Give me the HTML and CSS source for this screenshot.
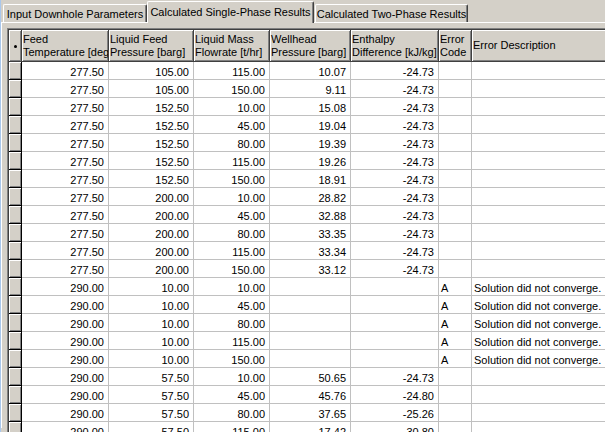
FILE: index.html
```html
<!DOCTYPE html>
<html>
<head>
<meta charset="utf-8">
<title>Results</title>
<link rel="stylesheet" href="styles.css">
</head>
<body>
<div class="window">
  <div class="tabstrip">
    <div class="tab t1">Input Downhole Parameters</div>
    <div class="tab active">Calculated Single-Phase Results</div>
    <div class="tab t3">Calculated Two-Phase Results</div>
  </div>
  <div class="panel">
    <div class="grid">
      <table>
        <colgroup>
          <col class="c-rh"><col class="c-feed"><col class="c-lfp"><col class="c-lmf"><col class="c-whp"><col class="c-enth"><col class="c-code"><col class="c-desc">
        </colgroup>
        <thead>
          <tr>
            <th class="corner"><span class="dot"></span></th>
            <th>Feed<br>Temperature [degC]</th>
            <th>Liquid Feed<br>Pressure [barg]</th>
            <th>Liquid Mass<br>Flowrate [t/hr]</th>
            <th>Wellhead<br>Pressure [barg]</th>
            <th>Enthalpy<br>Difference [kJ/kg]</th>
            <th>Error<br>Code</th>
            <th>Error Description</th>
          </tr>
        </thead>
        <tbody>
          <tr><td class="rh"></td><td class="n">277.50</td><td class="n">105.00</td><td class="n">115.00</td><td class="n">10.07</td><td class="n">-24.73</td><td></td><td></td></tr>
          <tr><td class="rh"></td><td class="n">277.50</td><td class="n">105.00</td><td class="n">150.00</td><td class="n">9.11</td><td class="n">-24.73</td><td></td><td></td></tr>
          <tr><td class="rh"></td><td class="n">277.50</td><td class="n">152.50</td><td class="n">10.00</td><td class="n">15.08</td><td class="n">-24.73</td><td></td><td></td></tr>
          <tr><td class="rh"></td><td class="n">277.50</td><td class="n">152.50</td><td class="n">45.00</td><td class="n">19.04</td><td class="n">-24.73</td><td></td><td></td></tr>
          <tr><td class="rh"></td><td class="n">277.50</td><td class="n">152.50</td><td class="n">80.00</td><td class="n">19.39</td><td class="n">-24.73</td><td></td><td></td></tr>
          <tr><td class="rh"></td><td class="n">277.50</td><td class="n">152.50</td><td class="n">115.00</td><td class="n">19.26</td><td class="n">-24.73</td><td></td><td></td></tr>
          <tr><td class="rh"></td><td class="n">277.50</td><td class="n">152.50</td><td class="n">150.00</td><td class="n">18.91</td><td class="n">-24.73</td><td></td><td></td></tr>
          <tr><td class="rh"></td><td class="n">277.50</td><td class="n">200.00</td><td class="n">10.00</td><td class="n">28.82</td><td class="n">-24.73</td><td></td><td></td></tr>
          <tr><td class="rh"></td><td class="n">277.50</td><td class="n">200.00</td><td class="n">45.00</td><td class="n">32.88</td><td class="n">-24.73</td><td></td><td></td></tr>
          <tr><td class="rh"></td><td class="n">277.50</td><td class="n">200.00</td><td class="n">80.00</td><td class="n">33.35</td><td class="n">-24.73</td><td></td><td></td></tr>
          <tr><td class="rh"></td><td class="n">277.50</td><td class="n">200.00</td><td class="n">115.00</td><td class="n">33.34</td><td class="n">-24.73</td><td></td><td></td></tr>
          <tr><td class="rh"></td><td class="n">277.50</td><td class="n">200.00</td><td class="n">150.00</td><td class="n">33.12</td><td class="n">-24.73</td><td></td><td></td></tr>
          <tr><td class="rh"></td><td class="n">290.00</td><td class="n">10.00</td><td class="n">10.00</td><td class="n"></td><td class="n"></td><td>A</td><td>Solution did not converge.</td></tr>
          <tr><td class="rh"></td><td class="n">290.00</td><td class="n">10.00</td><td class="n">45.00</td><td class="n"></td><td class="n"></td><td>A</td><td>Solution did not converge.</td></tr>
          <tr><td class="rh"></td><td class="n">290.00</td><td class="n">10.00</td><td class="n">80.00</td><td class="n"></td><td class="n"></td><td>A</td><td>Solution did not converge.</td></tr>
          <tr><td class="rh"></td><td class="n">290.00</td><td class="n">10.00</td><td class="n">115.00</td><td class="n"></td><td class="n"></td><td>A</td><td>Solution did not converge.</td></tr>
          <tr><td class="rh"></td><td class="n">290.00</td><td class="n">10.00</td><td class="n">150.00</td><td class="n"></td><td class="n"></td><td>A</td><td>Solution did not converge.</td></tr>
          <tr><td class="rh"></td><td class="n">290.00</td><td class="n">57.50</td><td class="n">10.00</td><td class="n">50.65</td><td class="n">-24.73</td><td></td><td></td></tr>
          <tr><td class="rh"></td><td class="n">290.00</td><td class="n">57.50</td><td class="n">45.00</td><td class="n">45.76</td><td class="n">-24.80</td><td></td><td></td></tr>
          <tr><td class="rh"></td><td class="n">290.00</td><td class="n">57.50</td><td class="n">80.00</td><td class="n">37.65</td><td class="n">-25.26</td><td></td><td></td></tr>
          <tr><td class="rh"></td><td class="n">290.00</td><td class="n">57.50</td><td class="n">115.00</td><td class="n">17.42</td><td class="n">-30.80</td><td></td><td></td></tr>
        </tbody>
      </table>
    </div>
  </div>
</div>
</body>
</html>
```
FILE: styles.css
```css
html, body {
  margin: 0;
  padding: 0;
  width: 605px;
  height: 432px;
  overflow: hidden;
  background: #d4d0c8;
}
.window {
  box-sizing: border-box;
  width: 605px;
  height: 432px;
  border-left: 1px solid #a9c7ec;
  background: #d4d0c8;
  font-family: "Liberation Sans", Arial, sans-serif;
  font-size: 11px;
  color: #000;
  overflow: hidden;
}
.tabstrip {
  height: 22px;
  display: flex;
  align-items: flex-end;
  padding-left: 2px;
}
.tab {
  box-sizing: border-box;
  height: 18px;
  padding-top: 2px;
  line-height: 14px;
  text-align: center;
  white-space: nowrap;
  border-top: 1px solid #fff;
  border-left: 1px solid #fff;
  border-right: 1px solid #404040;
  box-shadow: inset -1px 0 #808080;
  border-top-left-radius: 2px;
  border-top-right-radius: 2px;
  background: #d4d0c8;
}
.t1 { width: 144px; }
.active {
  width: 167px;
  height: 22px;
  margin-bottom: -1px;
  padding-top: 3px;
  position: relative;
  z-index: 1;
}
.t3 { width: 153px; margin-left: 1px; }
.panel {
  border-top: 1px solid #fff;
  border-left: 1px solid #fff;
  padding: 5px 0 0 5px;
  height: 400px;
}
.grid {
  border-top: 1px solid #808080;
  border-left: 1px solid #808080;
  width: 700px;
}
table {
  border-top: 1px solid #404040;
  border-left: 1px solid #404040;
  border-collapse: separate;
  border-spacing: 0;
  table-layout: fixed;
  width: 663px;
  background: #fff;
}
.c-rh { width: 13px; }
.c-feed { width: 87px; }
.c-lfp { width: 85px; }
.c-lmf { width: 76px; }
.c-whp { width: 81px; }
.c-enth { width: 88px; }
.c-code { width: 33px; }
.c-desc { width: 200px; }
th {
  box-sizing: border-box;
  height: 32px;
  padding: 0 0 0 1px;
  background: #d4d0c8;
  font-weight: normal;
  text-align: left;
  vertical-align: middle;
  line-height: 13px;
  white-space: nowrap;
  overflow: hidden;
  border-right: 1px solid #404040;
  border-bottom: 1px solid #404040;
  box-shadow: inset 1px 1px #fff, inset -1px -1px #808080;
}
th.corner {
  padding: 0;
  text-align: center;
}
.dot {
  display: inline-block;
  width: 3px;
  height: 3px;
  border-radius: 50%;
  background: #000;
  vertical-align: middle;
}
td {
  box-sizing: border-box;
  height: 18px;
  padding: 3px 2px 0 2px;
  line-height: 14px;
  white-space: nowrap;
  overflow: hidden;
  border-right: 1px solid #c0c0c0;
  border-bottom: 1px solid #c0c0c0;
}
td.n {
  text-align: right;
  padding-right: 4px;
}
td.rh {
  background: #d4d0c8;
  padding: 0;
  border-right: 1px solid #000;
  border-bottom: 1px solid #000;
  box-shadow: inset 1px 1px #fff, inset -1px -1px #808080;
}
```
